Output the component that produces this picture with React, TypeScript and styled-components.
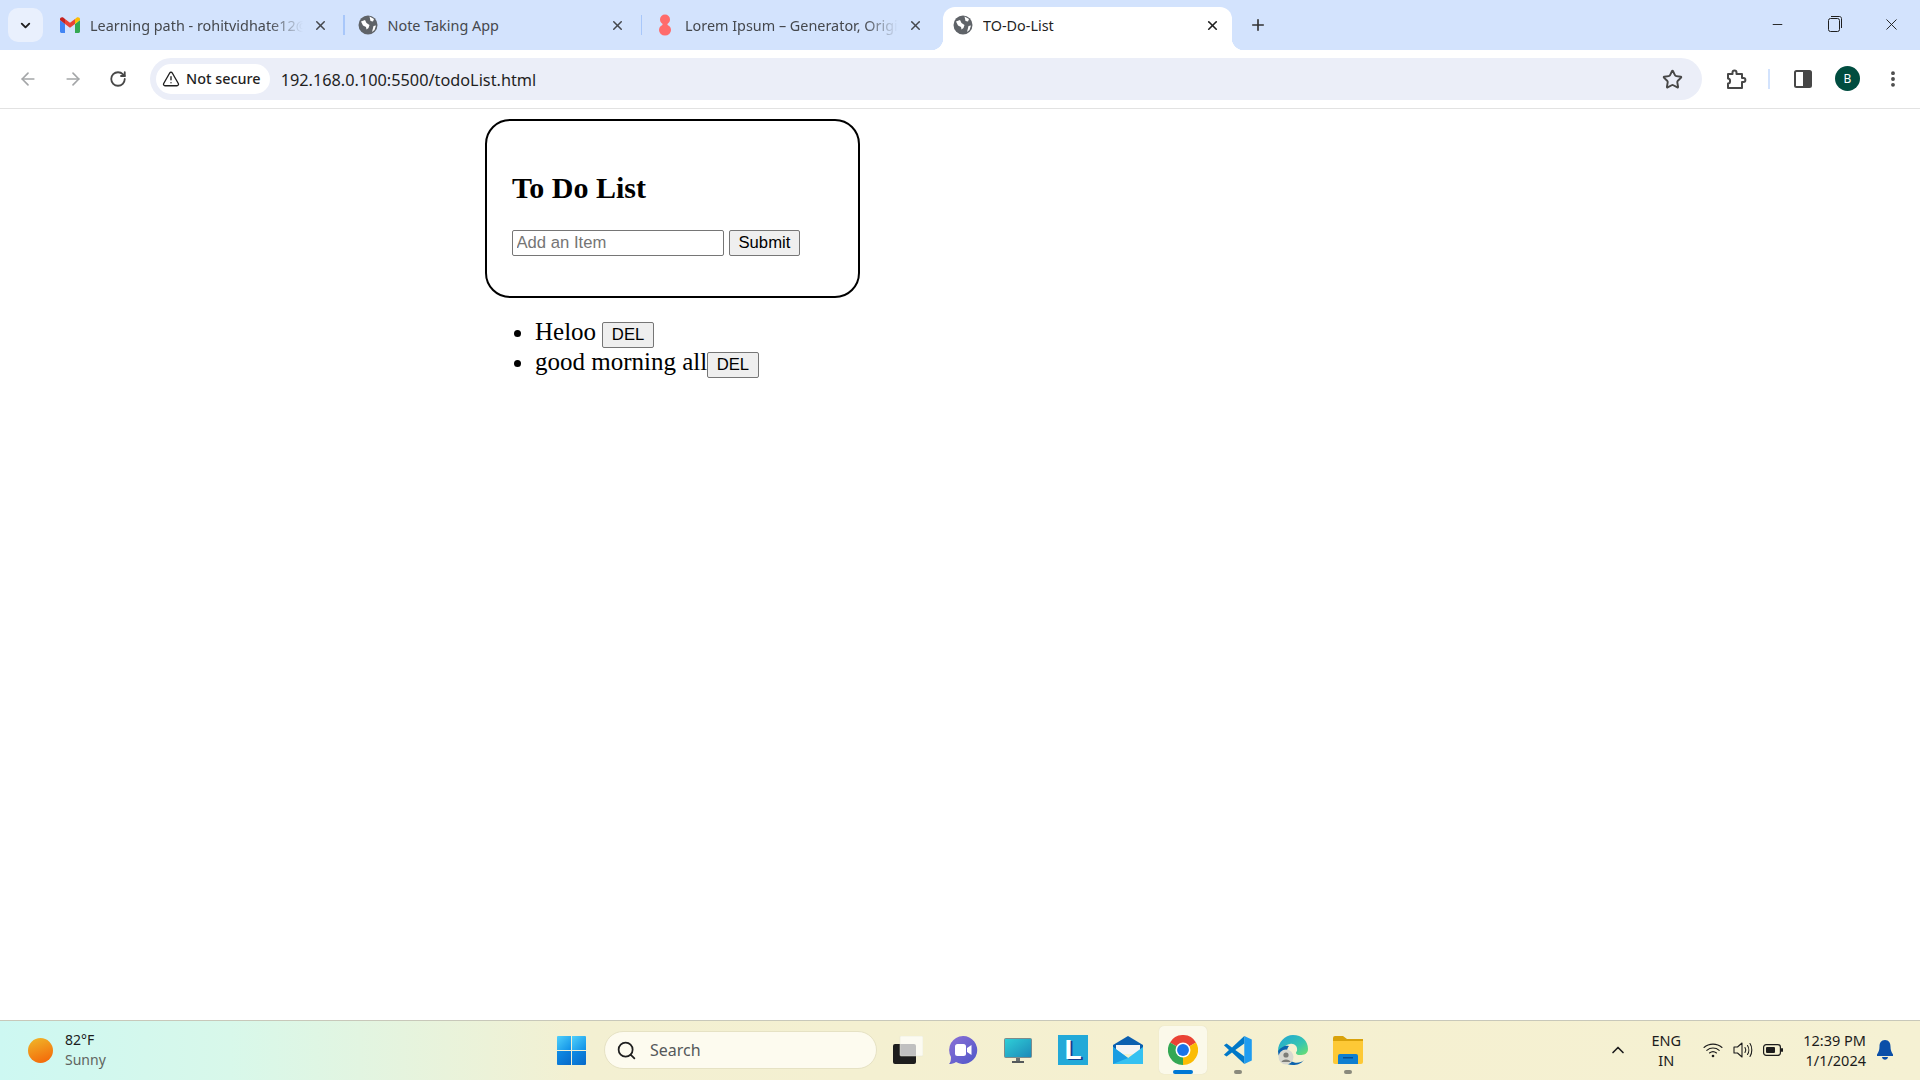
import styled, { createGlobalStyle } from "styled-components";
import {
  ArrowLeft,
  ArrowRight,
  ChevronDown,
  ChevronUp,
  EllipsisVertical,
  Minus,
  Plus,
  RotateCw,
  Search,
  Star,
  TriangleAlert,
  X,
} from "lucide-react";

const GlobalStyle = createGlobalStyle`
  html, body {
    margin: 0;
    padding: 0;
    height: 100%;
    background: #fff;
    overflow: hidden;
  }
  #root {
    height: 100%;
  }
`;

function GlobeIcon() {
  return (
    <svg width="20" height="20" viewBox="0 0 20 20">
      <circle cx="10" cy="10" r="9.5" fill="#5f6368" />
      <path d="M3 6.5 L7 5 L8.5 8 L11.5 10 L10.5 13 L8.5 14.5 L8 12 L5 10.5 Z" fill="#fff" />
      <path d="M11.5 1.5 L16 4 L15 6.5 L12.5 6 Z M15.5 11 L18 10.5 L16.5 15 L14 17 Z" fill="#fff" />
    </svg>
  );
}

function GmailIcon() {
  return (
    <svg width="20" height="16" viewBox="0 0 20 16">
      <path d="M0 3 L5 7 V16 H1.4 C0.6 16 0 15.4 0 14.6 Z" fill="#4285f4" />
      <path d="M20 3 L15 7 V16 H18.6 C19.4 16 20 15.4 20 14.6 Z" fill="#34a853" />
      <path d="M5 7 L10 10.8 L15 7 V2 L10 5.8 L5 2 Z" fill="#ea4335" />
      <path d="M15 2 L16.8 0.6 C18 -0.3 20 0.5 20 2 V3 L15 7 Z" fill="#fbbc04" />
      <path d="M5 2 L3.2 0.6 C2 -0.3 0 0.5 0 2 V3 L5 7 Z" fill="#c5221f" />
    </svg>
  );
}

function LoremIcon() {
  return (
    <svg width="20" height="22" viewBox="0 0 20 22">
      <ellipse cx="10" cy="5.5" rx="5" ry="5" fill="#ff6b6b" />
      <ellipse cx="10" cy="16" rx="6" ry="5.5" fill="#ff6b6b" />
      <rect x="7.5" y="8" width="5" height="6" fill="#ff6b6b" />
    </svg>
  );
}

function PuzzleIcon() {
  return (
    <svg width="22" height="22" viewBox="0 0 22 22" fill="none" stroke="#474747" strokeWidth="2" strokeLinejoin="round">
      <path d="M3 6 H7.5 V4.5 C7.5 1.8 11.5 1.8 11.5 4.5 V6 H17 V10 H18.5 C21 10 21 14 18.5 14 H17 V20 H3 V15.5 C5.8 15.5 5.8 10.5 3 10.5 Z" />
    </svg>
  );
}

function SidePanelIcon() {
  return (
    <svg width="18" height="18" viewBox="0 0 18 18">
      <rect x="1" y="1" width="16" height="16" rx="1.5" fill="#fff" stroke="#474747" strokeWidth="2" />
      <rect x="9" y="1" width="8" height="16" fill="#474747" />
    </svg>
  );
}

function RestoreIcon() {
  return (
    <svg width="14" height="16" viewBox="0 0 14 16" fill="none" stroke="#1f1f1f" strokeWidth="1">
      <rect x="0.5" y="2.5" width="11" height="13" rx="2" />
      <path d="M3 0.5 H11.5 C12.6 0.5 13.5 1.4 13.5 2.5 V12" />
    </svg>
  );
}

function WindowsLogo() {
  return (
    <svg width="29" height="29" viewBox="0 0 29 29">
      <defs>
        <linearGradient id="winA" x1="0" y1="0" x2="1" y2="1">
          <stop offset="0" stopColor="#4fd0fb" />
          <stop offset="1" stopColor="#0f8fe6" />
        </linearGradient>
        <linearGradient id="winB" x1="0" y1="0" x2="1" y2="1">
          <stop offset="0" stopColor="#0f8de6" />
          <stop offset="1" stopColor="#0669c9" />
        </linearGradient>
      </defs>
      <path d="M1 0 H14 V14 H0 V1 Q0 0 1 0 Z" fill="url(#winA)" />
      <path d="M15 0 H28 Q29 0 29 1 V14 H15 Z" fill="url(#winA)" />
      <path d="M0 15 H14 V29 H1 Q0 29 0 28 Z" fill="url(#winB)" />
      <path d="M15 15 H29 V28 Q29 29 28 29 H15 Z" fill="url(#winB)" />
    </svg>
  );
}

function TaskViewIcon() {
  return (
    <svg width="30" height="28" viewBox="0 0 30 28">
      <rect x="0" y="8" width="23" height="20" rx="2" fill="#1d1d1d" />
      <rect x="7" y="0" width="23" height="20" rx="1" fill="#ffffff" fillOpacity="0.72" stroke="#e6e4d4" strokeWidth="0.5" />
    </svg>
  );
}

function ChatIcon() {
  return (
    <svg width="30" height="30" viewBox="0 0 30 30">
      <defs>
        <linearGradient id="chatA" x1="0" y1="0" x2="1" y2="1">
          <stop offset="0" stopColor="#8b70d6" />
          <stop offset="1" stopColor="#4f57c9" />
        </linearGradient>
      </defs>
      <path d="M15 1 A14 14 0 1 1 8 27 C6 28.5 3.5 29 1 29 C2.5 27.5 3 25.5 3 22 A14 14 0 0 1 15 1 Z" fill="url(#chatA)" />
      <rect x="7" y="9" width="11" height="12" rx="2.5" fill="#fff" />
      <path d="M19 13 L23.5 10 V20 L19 17 Z" fill="#fff" />
    </svg>
  );
}

function MonitorIcon() {
  return (
    <svg width="28" height="25" viewBox="0 0 28 25">
      <defs>
        <linearGradient id="monA" x1="0" y1="0" x2="1" y2="1">
          <stop offset="0" stopColor="#2fd0d8" />
          <stop offset="1" stopColor="#1c88b8" />
        </linearGradient>
      </defs>
      <rect x="0.5" y="0.5" width="27" height="19" rx="1" fill="url(#monA)" stroke="#7d8b8b" />
      <rect x="12" y="20" width="4" height="3" fill="#6a7070" />
      <rect x="8" y="23" width="12" height="2" fill="#55595b" />
    </svg>
  );
}

function MailIcon() {
  return (
    <svg width="30" height="28" viewBox="0 0 30 28">
      <path d="M0 9 L15 0 L30 9 V16 H0 Z" fill="#0a5fb0" />
      <path d="M3 9 H27 V18 H3 Z" fill="#f4f4f4" />
      <path d="M0 11 L15 22 L30 11 V28 H0 Z" fill="#35c1f1" />
      <path d="M0 11 L15 22 L0 28 Z" fill="#1b9de2" />
    </svg>
  );
}

function ChromeIcon() {
  return (
    <svg width="30" height="30" viewBox="0 0 48 48">
      <path d="M24 24 L3.2 12 A24 24 0 0 1 44.8 12 Z" fill="#ea4335" />
      <path d="M24 24 L44.8 12 A24 24 0 0 1 24 48 Z" fill="#fbbc04" />
      <path d="M24 24 L24 48 A24 24 0 0 1 3.2 12 Z" fill="#34a853" />
      <circle cx="24" cy="24" r="12" fill="#fff" />
      <circle cx="24" cy="24" r="9.5" fill="#1a73e8" />
    </svg>
  );
}

function VsCodeIcon() {
  return (
    <svg width="30" height="30" viewBox="0 0 100 100">
      <path d="M71 3 L96 15 V85 L71 97 Z" fill="#1f9cf0" />
      <path d="M71 3 L30 42 L12 28 L3 34 L20 50 L3 66 L12 72 L30 58 L71 97 V72 L41 50 L71 28 Z" fill="#0078c8" />
    </svg>
  );
}

function EdgeIcon() {
  return (
    <svg width="30" height="30" viewBox="0 0 30 30">
      <defs>
        <linearGradient id="edgeA" x1="0" y1="0" x2="1" y2="1">
          <stop offset="0" stopColor="#1fa3d8" />
          <stop offset="0.6" stopColor="#37c6b0" />
          <stop offset="1" stopColor="#6fe06a" />
        </linearGradient>
      </defs>
      <path d="M15 0 C24 0 30 6 30 14 C30 19 26 20 22 20 C18 20 17 18 19 16 C20 11 16 8 12 9 C6 10 3 16 0 16 C0 7 7 0 15 0 Z" fill="url(#edgeA)" />
      <path d="M0 16 C3 12 7 10 11 11 C8 14 8 22 13 26 C17 29 23 28 26 25 C23 29 19 30 15 30 C7 30 0 24 0 16 Z" fill="#0c63ad" />
      <circle cx="8" cy="22" r="7.5" fill="#d8d8d0" />
      <circle cx="8" cy="20" r="2.6" fill="#7d7d78" />
      <path d="M3.5 27 C4 23.5 12 23.5 12.5 27 Z" fill="#7d7d78" />
    </svg>
  );
}

function FolderIcon() {
  return (
    <svg width="30" height="28" viewBox="0 0 30 28">
      <path d="M0 2 Q0 0 2 0 H10 L14 3 H30 V8 H0 Z" fill="#d9a20b" />
      <path d="M0 5 H30 V26 Q30 28 28 28 H2 Q0 28 0 26 Z" fill="#fdc936" />
      <path d="M5 28 V20 Q5 18 7 18 H23 Q25 18 25 20 V28 Z" fill="#0f7fd0" />
      <rect x="10" y="21" width="10" height="1.5" fill="#0a4f8f" />
    </svg>
  );
}

function WifiIcon() {
  return (
    <svg width="20" height="16" viewBox="0 0 20 16" fill="none" stroke="#1c1c1c" strokeWidth="1.1" strokeLinecap="round">
      <path d="M1 5.5 C6 1 14 1 19 5.5" />
      <path d="M3.8 8.3 C7.3 5.3 12.7 5.3 16.2 8.3" />
      <path d="M6.5 11 C8.6 9.3 11.4 9.3 13.5 11" />
      <circle cx="10" cy="14" r="1.3" fill="#1c1c1c" stroke="none" />
    </svg>
  );
}

function SpeakerIcon() {
  return (
    <svg width="20" height="18" viewBox="0 0 20 18" fill="none" stroke="#1c1c1c" strokeWidth="1.1" strokeLinecap="round" strokeLinejoin="round">
      <path d="M1 6 H4.5 L9 2 V16 L4.5 12 H1 Z" />
      <path d="M12 6.5 C13 8 13 10 12 11.5" />
      <path d="M14.5 4.5 C16.2 7 16.2 11 14.5 13.5" />
      <path d="M17 2.5 C19.4 6 19.4 12 17 15.5" />
    </svg>
  );
}

function BatteryIcon() {
  return (
    <svg width="20" height="12" viewBox="0 0 20 12">
      <rect x="0.6" y="0.6" width="16.8" height="10.8" rx="2.6" fill="none" stroke="#1c1c1c" strokeWidth="1.2" />
      <rect x="3" y="3" width="9" height="6" rx="1" fill="#1c1c1c" />
      <rect x="18" y="4" width="2" height="4" rx="1" fill="#1c1c1c" />
    </svg>
  );
}

function BellIcon() {
  return (
    <svg width="16" height="20" viewBox="0 0 16 20">
      <path d="M8 0 C12 0 13.5 3 13.5 6.5 C13.5 10 14.5 12 16 14.5 V16 H0 V14.5 C1.5 12 2.5 10 2.5 6.5 C2.5 3 4 0 8 0 Z" fill="#0b4fa8" />
      <path d="M5 17 H11 C10.5 20.6 5.5 20.6 5 17 Z" fill="#0b4fa8" />
    </svg>
  );
}

export default function App() {
  return (
    <>
      <GlobalStyle />
      <Screen>
        <TabBar>
          <TabSearch>
            <ChevronDown size={15} strokeWidth={3} color="#1f1f1f" />
          </TabSearch>
          <Tab>
            <Favicon><GmailIcon /></Favicon>
            <TabTitle $fade>Learning path - rohitvidhate12@</TabTitle>
            <CloseTab><X size={15} strokeWidth={2.4} /></CloseTab>
          </Tab>
          <TabSeparator />
          <Tab>
            <Favicon><GlobeIcon /></Favicon>
            <TabTitle>Note Taking App</TabTitle>
            <CloseTab><X size={15} strokeWidth={2.4} /></CloseTab>
          </Tab>
          <TabSeparator />
          <Tab>
            <Favicon><LoremIcon /></Favicon>
            <TabTitle $fade>Lorem Ipsum – Generator, Origi</TabTitle>
            <CloseTab><X size={15} strokeWidth={2.4} /></CloseTab>
          </Tab>
          <ActiveTab>
            <Favicon><GlobeIcon /></Favicon>
            <TabTitle $active>TO-Do-List</TabTitle>
            <CloseTab $active><X size={15} strokeWidth={2.6} /></CloseTab>
          </ActiveTab>
          <NewTab>
            <Plus size={18} strokeWidth={2.2} color="#333" />
          </NewTab>
          <WindowControls>
            <WindowButton><Minus size={15} strokeWidth={1.5} color="#1f1f1f" /></WindowButton>
            <WindowButton><RestoreIcon /></WindowButton>
            <WindowButton><X size={19} strokeWidth={1.2} color="#1f1f1f" /></WindowButton>
          </WindowControls>
        </TabBar>

        <Toolbar>
          <NavButton><ArrowLeft size={20} strokeWidth={2} color="#a4a6a8" /></NavButton>
          <NavButton><ArrowRight size={20} strokeWidth={2} color="#a4a6a8" /></NavButton>
          <NavButton><RotateCw size={18} strokeWidth={2.4} color="#474747" /></NavButton>
          <AddressBar>
            <SecurityChip>
              <TriangleAlert size={18} strokeWidth={1.8} color="#1f1f1f" />
              <SecurityLabel>Not secure</SecurityLabel>
            </SecurityChip>
            <Url>192.168.0.100:5500/todoList.html</Url>
            <BookmarkStar><Star size={21} strokeWidth={2.2} color="#474747" /></BookmarkStar>
          </AddressBar>
          <NavButton $first><PuzzleIcon /></NavButton>
          <ToolbarDivider />
          <NavButton><SidePanelIcon /></NavButton>
          <NavButton><Avatar>B</Avatar></NavButton>
          <NavButton><EllipsisVertical size={20} strokeWidth={2.6} color="#474747" /></NavButton>
        </Toolbar>

        <Page>
          <Card>
            <Heading>To Do List</Heading>
            <ItemForm onSubmit={(e) => e.preventDefault()}>
              <ItemInput placeholder="Add an Item" />
              <PlainButton>Submit</PlainButton>
            </ItemForm>
          </Card>
          <TodoList>
            <li>Heloo <PlainButton>DEL</PlainButton></li>
            <li>good morning all<PlainButton>DEL</PlainButton></li>
          </TodoList>
        </Page>

        <Taskbar>
          <Weather>
            <SunBadge />
            <WeatherText>
              <span>82°F</span>
              <WeatherNote>Sunny</WeatherNote>
            </WeatherText>
          </Weather>
          <StartButton><WindowsLogo /></StartButton>
          <SearchBox>
            <Search size={21} strokeWidth={2} color="#1f1f1f" />
            Search
          </SearchBox>
          <TaskIcons>
            <TaskItem><TaskViewIcon /></TaskItem>
            <TaskItem><ChatIcon /></TaskItem>
            <TaskItem><MonitorIcon /></TaskItem>
            <TaskItem>
              <LogoTile>L</LogoTile>
            </TaskItem>
            <TaskItem><MailIcon /></TaskItem>
            <TaskItem $active $running><ChromeIcon /></TaskItem>
            <TaskItem $running><VsCodeIcon /></TaskItem>
            <TaskItem><EdgeIcon /></TaskItem>
            <TaskItem $running><FolderIcon /></TaskItem>
          </TaskIcons>
          <Tray>
            <ChevronUp size={20} strokeWidth={2} color="#1c1c1c" />
            <Language>
              <span>ENG</span>
              <span>IN</span>
            </Language>
            <TrayIcons>
              <TrayIcon><WifiIcon /></TrayIcon>
              <TrayIcon><SpeakerIcon /></TrayIcon>
              <TrayIcon><BatteryIcon /></TrayIcon>
            </TrayIcons>
            <Clock>
              <span>12:39 PM</span>
              <span>1/1/2024</span>
            </Clock>
            <BellIcon />
          </Tray>
        </Taskbar>
      </Screen>
    </>
  );
}

const Screen = styled.div`
  display: flex;
  flex-direction: column;
  width: 1920px;
  height: 1080px;
  overflow: hidden;
  background: #fff;
`;

const TabBar = styled.div`
  display: flex;
  align-items: flex-end;
  flex: 0 0 50px;
  height: 50px;
  padding-left: 8px;
  box-sizing: border-box;
  background: #d3e3fd;
  font-family: "Noto Sans", "Open Sans", sans-serif;
`;

const TabSearch = styled.div`
  display: flex;
  align-items: center;
  justify-content: center;
  align-self: flex-start;
  width: 35px;
  height: 34px;
  margin: 8px 4px 0 0;
  border-radius: 10px;
  background: #e9f0fd;
`;

const Tab = styled.div`
  display: flex;
  align-items: center;
  width: 296px;
  height: 43px;
  padding: 0 15.5px 7px 13px;
  box-sizing: border-box;
`;

const ActiveTab = styled(Tab)`
  position: relative;
  width: 289px;
  margin-left: 5px;
  padding: 0 12px 7px 10px;
  background: #fff;
  border-radius: 12px 12px 0 0;

  &::before,
  &::after {
    content: "";
    position: absolute;
    bottom: 0;
    width: 12px;
    height: 12px;
  }
  &::before {
    left: -12px;
    background: radial-gradient(circle at 0 0, #d3e3fd 12px, #fff 12.5px);
  }
  &::after {
    right: -12px;
    background: radial-gradient(circle at 100% 0, #d3e3fd 12px, #fff 12.5px);
  }
`;

const TabSeparator = styled.div`
  flex: 0 0 1.5px;
  height: 20px;
  align-self: flex-start;
  margin-top: 15px;
  background: #a8c7fa;
`;

const Favicon = styled.span`
  display: flex;
  align-items: center;
  justify-content: center;
  flex: 0 0 20px;
  width: 20px;
  margin-right: 10px;
`;

const TabTitle = styled.span<{ $fade?: boolean; $active?: boolean }>`
  flex: 1;
  min-width: 0;
  overflow: hidden;
  white-space: nowrap;
  font-size: 14.4px;
  color: ${(p) => (p.$active ? "#1f1f1f" : "#45484d")};
  ${(p) =>
    p.$fade &&
    "-webkit-mask-image: linear-gradient(90deg, #000 84%, transparent 100%); mask-image: linear-gradient(90deg, #000 84%, transparent 100%);"}
`;

const CloseTab = styled.span<{ $active?: boolean }>`
  display: flex;
  flex: 0 0 15px;
  margin-left: 10px;
  color: ${(p) => (p.$active ? "#1f1f1f" : "#45484d")};
`;

const NewTab = styled.div`
  display: flex;
  align-items: center;
  justify-content: center;
  align-self: flex-start;
  width: 30px;
  height: 30px;
  margin: 10px 0 0 11px;
`;

const WindowControls = styled.div`
  display: flex;
  align-self: flex-start;
  margin-left: auto;
`;

const WindowButton = styled.div`
  display: flex;
  align-items: center;
  justify-content: center;
  width: 57px;
  height: 48px;
`;

const Toolbar = styled.div`
  display: flex;
  align-items: center;
  flex: 0 0 59px;
  height: 59px;
  padding: 0 5px;
  box-sizing: border-box;
  background: #fff;
  border-bottom: 1px solid #e2e2e2;
  border-radius: 10px 10px 0 0;
  font-family: "Noto Sans", "Open Sans", sans-serif;
`;

const NavButton = styled.div<{ $first?: boolean }>`
  display: flex;
  align-items: center;
  justify-content: center;
  flex: 0 0 45px;
  height: 45px;
  margin-left: ${(p) => (p.$first ? "11px" : "0")};
`;

const AddressBar = styled.div`
  display: flex;
  align-items: center;
  flex: 1;
  height: 42px;
  margin-left: 10px;
  padding: 0 19px 0 6px;
  box-sizing: border-box;
  border-radius: 21px;
  background: #ebeef8;
`;

const SecurityChip = styled.div`
  display: flex;
  align-items: center;
  gap: 6px;
  height: 30px;
  padding: 0 9px 0 6px;
  border-radius: 15px;
  background: #fff;
  color: #1f1f1f;
  white-space: nowrap;
`;

const SecurityLabel = styled.span`
  font-size: 14.4px;
  font-weight: 500;
  line-height: 18px;
  margin-bottom: 1px;
`;

const Url = styled.span`
  margin: 1px 0 0 11px;
  font-size: 16.3px;
  color: #1f1f1f;
`;

const BookmarkStar = styled.span`
  display: flex;
  margin-left: auto;
`;

const ToolbarDivider = styled.div`
  flex: 0 0 2px;
  height: 20px;
  margin: 0 10px 0 10px;
  background: #d3e3fd;
`;

const Avatar = styled.div`
  display: flex;
  align-items: center;
  justify-content: center;
  width: 25px;
  height: 25px;
  margin-bottom: 1px;
  border-radius: 50%;
  background: #004d40;
  color: #fff;
  font-size: 12px;
`;

const Page = styled.main`
  flex: 1;
  padding: 10px 0 0 485px;
  background: #fff;
  font-family: "Liberation Serif", "Times New Roman", serif;
  color: #000;
`;

const Card = styled.section`
  width: 375px;
  height: 179px;
  padding: 0 25px;
  box-sizing: border-box;
  border: 2px solid #000;
  border-radius: 25px;
`;

const Heading = styled.h1`
  margin: 50px 0 25px;
  font-size: 30px;
  line-height: 34px;
  font-weight: 700;
`;

const ItemForm = styled.form`
  display: flex;
  gap: 5px;
`;

const ItemInput = styled.input`
  width: 212px;
  height: 26px;
  padding: 0 3.5px;
  box-sizing: border-box;
  border: 1px solid #767676;
  border-radius: 2px;
  background: #fff;
  font-family: "Liberation Sans", Arial, sans-serif;
  font-size: 16.67px;
  outline: none;

  &::placeholder {
    color: #757575;
    opacity: 1;
  }
`;

const PlainButton = styled.button`
  height: 26px;
  padding: 0 8.5px;
  box-sizing: border-box;
  border: 1px solid #767676;
  border-radius: 2px;
  background: #efefef;
  color: #000;
  font-family: "Liberation Sans", Arial, sans-serif;
  font-size: 16.67px;
`;

const TodoList = styled.ul`
  margin: 19px 0 0;
  padding-left: 50px;
  font-size: 25px;
  line-height: 30px;

  li {
    height: 30px;
  }
`;

const Taskbar = styled.footer`
  display: flex;
  align-items: center;
  flex: 0 0 60px;
  height: 60px;
  padding-bottom: 1px;
  box-sizing: border-box;
  border-top: 1px solid #c8c8ba;
  background: linear-gradient(90deg, #cdf8f2 0%, #d8f8ea 12%, #f3f0d2 30%, #f5f0d0 60%, #f5f1d3 100%);
  font-family: "Noto Sans", "Open Sans", sans-serif;
  color: #1c1c1c;
`;

const Weather = styled.div`
  display: flex;
  align-items: center;
  gap: 12px;
  width: 557px;
  padding-left: 28px;
  box-sizing: border-box;
`;

const SunBadge = styled.div`
  width: 25px;
  height: 25px;
  border-radius: 50%;
  background: linear-gradient(160deg, #f0b92a 0%, #f46a0a 90%);
`;

const WeatherText = styled.div`
  display: flex;
  flex-direction: column;
  gap: 1px;
  margin-bottom: 2px;
  font-size: 14px;
  line-height: 19px;
`;

const WeatherNote = styled.span`
  color: #5f6560;
`;

const StartButton = styled.div`
  display: flex;
  width: 29px;
`;

const SearchBox = styled.div`
  display: flex;
  align-items: center;
  gap: 13px;
  width: 273px;
  height: 38px;
  margin-left: 18px;
  padding-left: 11px;
  box-sizing: border-box;
  border: 1px solid #e6e2c4;
  border-radius: 19px;
  background: #fdfbef;
  font-size: 16px;
  color: #55585a;
`;

const TaskIcons = styled.div`
  display: flex;
  gap: 7px;
  margin-left: 7px;
`;

const TaskItem = styled.div<{ $active?: boolean; $running?: boolean }>`
  position: relative;
  display: flex;
  align-items: center;
  justify-content: center;
  width: 48px;
  height: 48px;
  border-radius: 5px;
  background: ${(p) => (p.$active ? "#fbf9ea" : "transparent")};
  box-shadow: ${(p) => (p.$active ? "0 0 1px #d8d5bd" : "none")};

  &::after {
    content: "";
    display: ${(p) => (p.$running ? "block" : "none")};
    position: absolute;
    bottom: 0;
    left: 50%;
    transform: translateX(-50%);
    width: ${(p) => (p.$active ? "20px" : "8px")};
    height: 4px;
    border-radius: 2px;
    background: ${(p) => (p.$active ? "#0078d4" : "#8a8a7c")};
  }
`;

const LogoTile = styled.div`
  display: flex;
  align-items: center;
  justify-content: center;
  width: 30px;
  height: 30px;
  background: #22a9d8;
  color: #fff;
  font-family: "Liberation Sans", Arial, sans-serif;
  font-size: 28px;
  font-weight: 700;
  text-shadow: 2px 1px 0 #123e90;
`;

const Tray = styled.div`
  display: flex;
  align-items: center;
  margin-left: auto;
  padding-right: 27px;
`;

const Language = styled.div`
  display: flex;
  flex-direction: column;
  align-items: center;
  width: 36px;
  margin-left: 20px;
  font-size: 14.5px;
  line-height: 20px;
`;

const TrayIcons = styled.div`
  display: flex;
  gap: 10px;
  margin-left: 19px;
`;

const TrayIcon = styled.span`
  display: flex;
  align-items: center;
  justify-content: center;
  width: 20px;
  height: 20px;
`;

const Clock = styled.div`
  display: flex;
  flex-direction: column;
  align-items: flex-end;
  margin: 0 11px 0 20px;
  font-size: 14.5px;
  line-height: 20px;
`;
